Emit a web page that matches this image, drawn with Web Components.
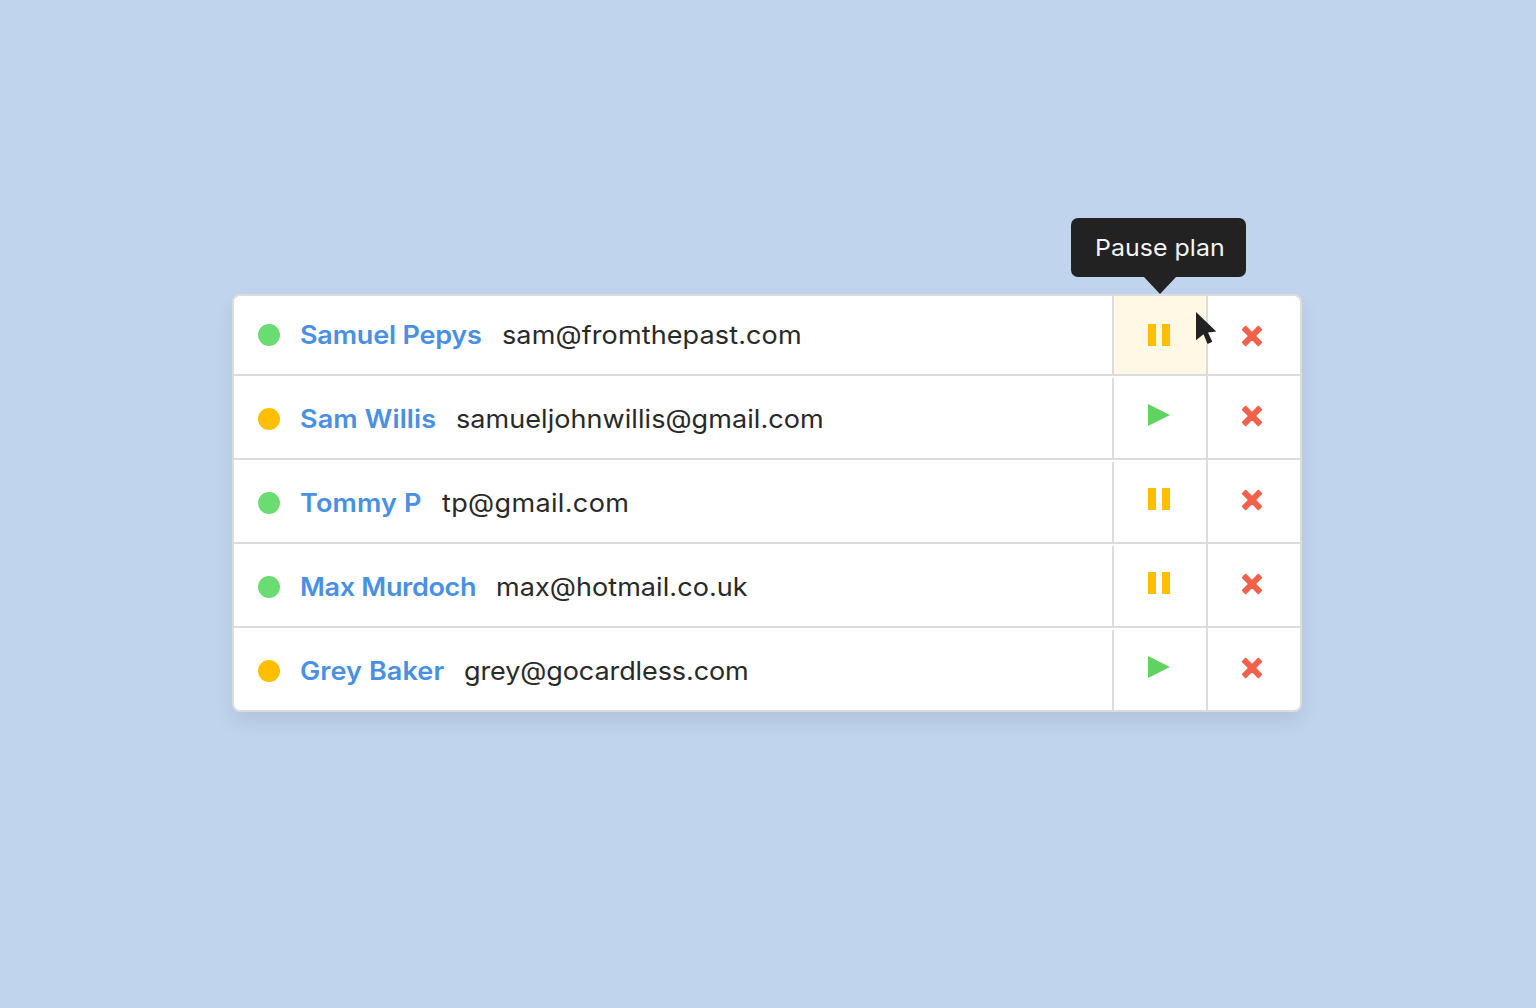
<!DOCTYPE html>
<html lang="en"><head><meta charset="utf-8"><title>Plans</title>
<style>
html,body{margin:0;height:100%}
body{background:#c0d4ee;overflow:hidden;font-family:Inter,"Open Sans",sans-serif}
</style></head><body>
<plan-list>
  <plan-row first status="active" action="pause" hover><fit-text slot="name" w="180">Samuel Pepys</fit-text><fit-text slot="email" w="298">sam@fromthepast.com</fit-text></plan-row>
  <plan-row status="paused" action="play"><fit-text slot="name" w="134.5">Sam Willis</fit-text><fit-text slot="email" w="366">samueljohnwillis@gmail.com</fit-text></plan-row>
  <plan-row status="active" action="pause"><fit-text slot="name" w="120">Tommy P</fit-text><fit-text slot="email" w="185.5">tp@gmail.com</fit-text></plan-row>
  <plan-row status="active" action="pause"><fit-text slot="name" w="174.5">Max Murdoch</fit-text><fit-text slot="email" w="250">max@hotmail.co.uk</fit-text></plan-row>
  <plan-row status="paused" action="play"><fit-text slot="name" w="142.5">Grey Baker</fit-text><fit-text slot="email" w="283">grey@gocardless.com</fit-text></plan-row>
</plan-list>
<script>
const define=(name,html,setup)=>customElements.define(name,class extends HTMLElement{
  connectedCallback(){
    if(this.shadowRoot)return;
    this.attachShadow({mode:'open'}).innerHTML=html;
    if(setup)setup(this,this.shadowRoot);
  }
});

// A single line of slightly extended text whose tracking is adjusted to occupy the width in "w".
define('fit-text',`<style>:host{display:block;white-space:nowrap;flex:none}span{display:inline-block;transform:scaleX(1.06);transform-origin:0 50%}</style><span><slot></slot></span>`,
(el,root)=>{
  const w=+el.getAttribute('w'),s=root.querySelector('span');
  el.style.width=w+'px';
  const fit=()=>{
    s.style.letterSpacing='0px';
    const n=el.textContent.length,natural=s.getBoundingClientRect().width/1.06;
    s.style.letterSpacing=(((w+1.7)/1.06-natural)/n)+'px';
  };
  requestAnimationFrame(fit);
  document.fonts.ready.then(fit);
});

const icons={
  pause:`<svg width="22" height="22"><path fill="#ffbe00" d="M0 0h8v22H0zM14 0h8v22h-8z"/></svg>`,
  play:`<svg width="22" height="22"><path fill="#5fd35f" d="M0 0L22 11 0 22z"/></svg>`,
  close:`<svg width="22" height="22"><path fill="#f0624b" stroke="#f0624b" stroke-width="2" stroke-linejoin="round" d="M4.6 1.8L11 8.2 17.4 1.8 20.2 4.6 13.8 11 20.2 17.4 17.4 20.2 11 13.8 4.6 20.2 1.8 17.4 8.2 11 1.8 4.6z"/></svg>`
};
define('plan-icon',`<style>:host{display:block;width:22px;height:22px}svg{display:block}</style><div></div>`,
(el,root)=>{root.querySelector('div').innerHTML=icons[el.getAttribute('kind')]});

define('status-dot',`<style>:host{display:block;flex:none;width:22px;height:22px;border-radius:50%;background:#6bdc71}:host([kind=paused]){background:#ffbe00}</style>`);

define('tool-tip',`<style>
:host{display:flex;width:175px;height:59px;border-radius:7px;background:#222;color:#f5f5f5;font-size:23.5px;line-height:59px;justify-content:center}
svg{position:absolute;top:59px;left:73px}
</style><slot></slot><svg width="32" height="17"><path fill="#222" d="M0 0H32L16 17z"/></svg>`);

define('mouse-pointer',`<style>:host{display:block;width:22px;height:34px}svg{display:block}</style>
<svg width="22" height="34"><path fill="#222" d="M0 0L20.3 19.6 12 20.5 16.3 29.7 11.6 32 7.5 22.2 0 28.3z"/></svg>`);

define('plan-row',`<style>
:host{display:flex;height:82px;border-top:2px solid #dcdcdc}
:host([first]){height:78px;border-top:0}
.who{flex:1;display:flex;align-items:center;padding:4px 0 0 24px;box-sizing:border-box}
:host([first]) .who{padding-top:0}
.name,.email{font-size:25.5px;padding-bottom:2px}
.name{margin-left:20px;font-weight:570;color:#4a90e2}
.email{margin-left:21.5px;color:#292929}
.cell{position:relative;box-sizing:border-box;width:94px;border-left:2px solid #dcdcdc;display:flex;justify-content:center;padding:28px 2px 0 0}
:host(:not([first])) .action{border-left:0;padding-left:2px;background:linear-gradient(#dcdcdc,#dcdcdc) 0 2px/2px 100% no-repeat}
.cell+.cell{padding:29px 4px 0 0}
:host([hover]) .action{background:#fff8e4}
tool-tip{position:absolute;left:-43px;top:-78px}
mouse-pointer{position:absolute;left:82px;top:16px;z-index:2}
</style>
<div class="who"><status-dot></status-dot><div class="name"><slot name="name"></slot></div><div class="email"><slot name="email"></slot></div></div>
<div class="cell action"><plan-icon></plan-icon></div>
<div class="cell"><plan-icon kind="close"></plan-icon></div>`,
(el,root)=>{
  root.querySelector('status-dot').setAttribute('kind',el.getAttribute('status'));
  const cell=root.querySelector('.action'),old=cell.firstElementChild;
  const icon=document.createElement('plan-icon');
  icon.setAttribute('kind',el.getAttribute('action'));
  old.replaceWith(icon);
  if(el.hasAttribute('hover')){
    cell.style.zIndex=1;
    cell.insertAdjacentHTML('beforeend','<tool-tip><fit-text w="128">Pause plan</fit-text></tool-tip><mouse-pointer></mouse-pointer>');
  }
});

define('plan-list',`<style>
:host{display:flex;justify-content:center;padding:294px 2px 0 0}
.card{display:flex;flex-direction:column;width:1066px;border:2px solid #dcdcdc;border-radius:8px;background:#fff;box-shadow:0 10px 20px rgba(0,0,0,.08)}
</style><div class="card"><slot></slot></div>`);
</script>
</body></html>
